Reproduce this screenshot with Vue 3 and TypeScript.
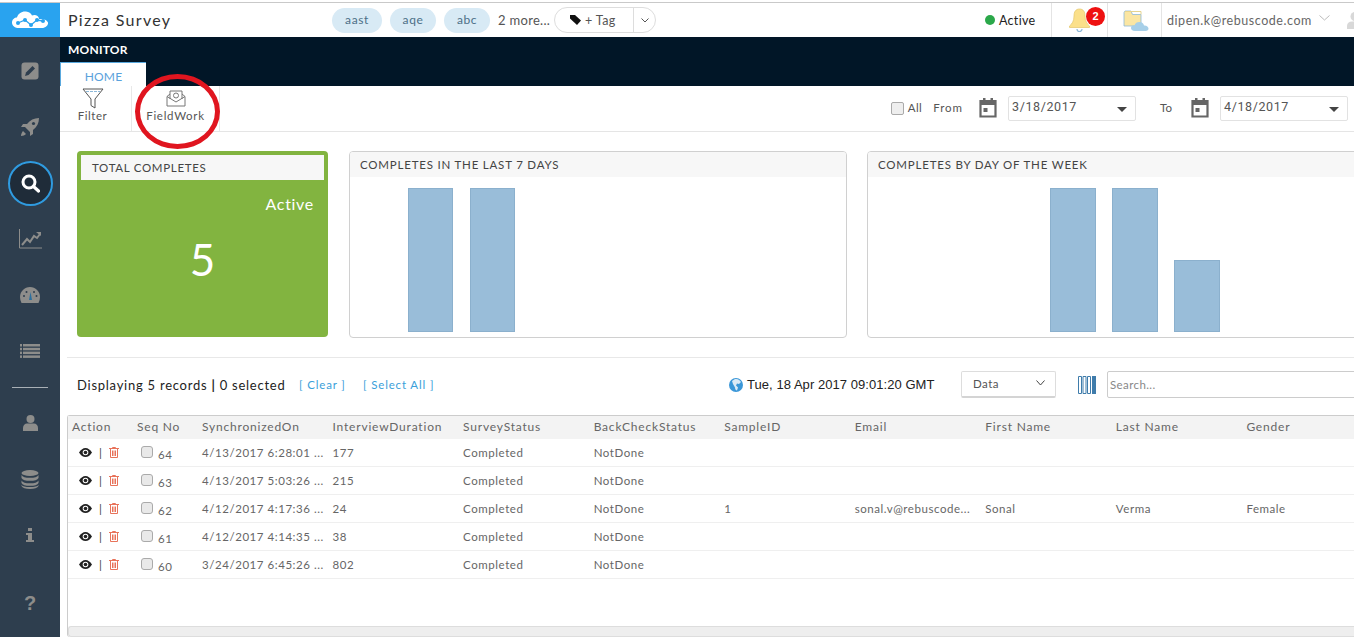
<script setup lang="ts">
const navTop = ["edit", "rocket", "search", "chart", "gauge", "list"];
const navBottom = ["user", "db", "info"];

const columns = [
  "Action", "Seq No", "SynchronizedOn", "InterviewDuration", "SurveyStatus",
  "BackCheckStatus", "SampleID", "Email", "First Name", "Last Name", "Gender",
];

const rows = [
  { seq: 64, date: "4/13/2017 6:28:01 ...", dur: 177, sample: "", email: "", first: "", last: "", gender: "" },
  { seq: 63, date: "4/13/2017 5:03:26 ...", dur: 215, sample: "", email: "", first: "", last: "", gender: "" },
  { seq: 62, date: "4/12/2017 4:17:36 ...", dur: 24, sample: "1", email: "sonal.v@rebuscode...", first: "Sonal", last: "Verma", gender: "Female" },
  { seq: 61, date: "4/12/2017 4:14:35 ...", dur: 38, sample: "", email: "", first: "", last: "", gender: "" },
  { seq: 60, date: "3/24/2017 6:45:26 ...", dur: 802, sample: "", email: "", first: "", last: "", gender: "" },
];

const last7 = [144, 144];
const byDay = [144, 144, 72];
</script>

<template>
  <div class="app">
    <aside class="sidebar">
      <div class="logo">
        <svg width="38" height="20" viewBox="0 0 38 20">
          <path d="M8 18c-4 0-7-2-7-5.500 0-3 2.500-5 5-5 1-4 5-6.500 9-6 3 .3 5 2 6 4 1.500-.8 4-.8 5.500.5 1 .8 1.500 2 1.500 3 3-.5 8 .5 9 3.500.5 3-3 6-7 5.500z" fill="#fff"/>
          <path d="M7 13l7-3 6 5 6-5 6 1" fill="none" stroke="#29a3ef" stroke-width="1.300"/>
          <circle cx="7" cy="13" r="2" fill="#29a3ef"/>
          <circle cx="14" cy="10" r="2" fill="#29a3ef"/>
          <circle cx="20" cy="15" r="2" fill="#29a3ef"/>
          <circle cx="26" cy="10" r="2" fill="#29a3ef"/>
          <circle cx="32" cy="11" r="2" fill="#29a3ef"/>
        </svg>
      </div>
      <nav class="nav">
        <div v-for="n in navTop" :key="n" class="nav-item">
          <svg v-if="n === 'edit'" width="18" height="18" viewBox="0 0 18 18">
            <rect x="0.500" y="0.500" width="17" height="17" rx="3" fill="#8d8d8b"/>
            <path d="M4 14l1-3.500 6.500-6.500 2.500 2.500-6.500 6.500z" fill="#2e3e4e"/>
          </svg>
          <svg v-else-if="n === 'rocket'" width="20" height="20" viewBox="0 0 20 20">
            <path d="M19 1c-5 0-9 2-12 6H3L1 10h4l5 5v4l3-2v-4c4-3 6-7 6-12z" fill="#8d8d8b"/>
            <path d="M3 14c-1 1-2 3-2 5 2 0 4-1 5-2z" fill="#8d8d8b"/>
            <circle cx="13.500" cy="6.500" r="1.600" fill="#2e3e4e"/>
          </svg>
          <div v-else-if="n === 'search'" class="search-ring">
            <svg width="20" height="20" viewBox="0 0 20 20">
              <circle cx="9" cy="9" r="6" fill="none" stroke="#fff" stroke-width="3"/>
              <path d="M13.500 13.500l5 4.500" stroke="#fff" stroke-width="3.200" stroke-linecap="round"/>
            </svg>
          </div>
          <svg v-else-if="n === 'chart'" width="23" height="20" viewBox="0 0 23 20">
            <path d="M.500 0v19H23" fill="none" stroke="#8d8d8b"/>
            <path d="M3 16l5-6 3 3 4-6 3 2 3-4" fill="none" stroke="#8d8d8b" stroke-width="2"/>
            <path d="M17 3h5v4z" fill="#8d8d8b"/>
          </svg>
          <svg v-else-if="n === 'gauge'" width="20" height="16" viewBox="0 0 20 16">
            <path d="M10 0C4.500 0 0 4.500 0 10c0 2 .5 4 1.500 6h17c1-2 1.500-4 1.500-6C20 4.500 15.500 0 10 0z" fill="#8d8d8b"/>
            <path d="M10.500 5L9 13h3z" fill="#2b6f9e"/>
            <circle cx="4" cy="9" r="1" fill="#2e3e4e"/>
            <circle cx="6.500" cy="5" r="1" fill="#2e3e4e"/>
            <circle cx="14" cy="5" r="1" fill="#2e3e4e"/>
            <circle cx="16.500" cy="9" r="1" fill="#2e3e4e"/>
          </svg>
          <svg v-else width="20" height="14" viewBox="0 0 20 14" fill="#8d8d8b">
            <rect x="0" y="0" width="2" height="2.500"/><rect x="3" y="0" width="17" height="2.500"/>
            <rect x="0" y="3.800" width="2" height="2.500"/><rect x="3" y="3.800" width="17" height="2.500"/>
            <rect x="0" y="7.600" width="2" height="2.500"/><rect x="3" y="7.600" width="17" height="2.500"/>
            <rect x="0" y="11.400" width="2" height="2.500"/><rect x="3" y="11.400" width="17" height="2.500"/>
          </svg>
        </div>
        <div class="nav-divider"></div>
        <div v-for="n in navBottom" :key="n" class="nav-item">
          <svg v-if="n === 'user'" width="15" height="16" viewBox="0 0 15 16" fill="#8d8d8b">
            <circle cx="7.500" cy="4" r="4"/>
            <path d="M0 16v-3c0-3 2-4.500 4-4.500h7c2 0 4 1.500 4 4.500v3z"/>
          </svg>
          <svg v-else-if="n === 'db'" width="18" height="19" viewBox="0 0 18 19" fill="#8d8d8b">
            <ellipse cx="9" cy="3" rx="8.500" ry="3"/>
            <path d="M.500 5c1 2 4 2.800 8.500 2.800S16.500 7 17.500 5v3c-1 2-4 2.800-8.500 2.800S1.500 10 .500 8z"/>
            <path d="M.500 10.500c1 2 4 2.800 8.500 2.800s7.500-.8 8.500-2.800v2.500c-1 2-4 2.800-8.500 2.800S1.500 15 .500 13z"/>
            <path d="M.500 15c1 1.500 4 2 8.500 2s7.500-.5 8.500-2v1c-1 2-4 3-8.500 3s-7.500-1-8.500-3z"/>
          </svg>
          <svg v-else width="8" height="14" viewBox="0 0 8 14" fill="#8d8d8b">
            <rect x="2" y="0" width="4" height="3"/>
            <path d="M0 5h6v7h2v2H0v-2h2V7H0z"/>
          </svg>
        </div>
        <div class="nav-item help">?</div>
      </nav>
    </aside>

    <div class="main">
      <header class="topbar">
        <span class="title">Pizza Survey</span>
        <div class="tags">
          <span class="pill p1">aast</span>
          <span class="pill p2">aqe</span>
          <span class="pill p3">abc</span>
          <span class="more">2 more...</span>
          <div class="tag-btn">
            <span class="tag-main">
              <svg width="11" height="10" viewBox="0 0 11 10"><path d="M0 0h5l6 5.500L7 10 0 3.500z" fill="#111"/></svg>
              + Tag
            </span>
            <span class="tag-caret">
              <svg width="8" height="5" viewBox="0 0 8 5"><path d="M.5.5L4 4 7.500.5" fill="none" stroke="#555"/></svg>
            </span>
          </div>
        </div>
        <div class="status">
          <span class="dot"></span>
          <span>Active</span>
        </div>
        <div class="bell">
          <svg width="21" height="25" viewBox="0 0 21 25">
            <path d="M10.500 1C6.500 1 5 4 5 8c0 5-2 8-4.500 10v1.500h20V18C18 16 16 13 16 8c0-4-1.500-7-5.500-7z" fill="#fbe08a" stroke="#e2c66a" stroke-width=".7"/>
            <path d="M8 21a2.500 2.500 0 0 0 5 0" fill="none" stroke="#8db8d8" stroke-width="1.200"/>
          </svg>
          <span class="badge">2</span>
        </div>
        <div class="folder">
          <svg width="26" height="24" viewBox="0 0 26 24">
            <path d="M1 4.500V18h17V6.500H9.500L8 3H2z" fill="#fbe6a2" stroke="#8db8d8" stroke-width=".8"/>
            <path d="M2 3.500h16v3" fill="none" stroke="#e6d48e"/>
            <path d="M12 23c-3 0-4-1.500-4-3 0-2 2-3 3.500-2.500C12 15 14 14 16.500 14c2.500 0 4 1.500 4.500 3.500 2.500-.3 4.500 1.300 4.500 3 0 1.500-1 2.500-3 2.500z" fill="#a6cfe8"/>
          </svg>
        </div>
        <div class="account">
          <span>dipen.k@rebuscode.com</span>
          <svg width="11" height="6" viewBox="0 0 11 6"><path d="M.5.5L5.500 5 10.500.5" fill="none" stroke="#bbb"/></svg>
          <svg class="user" width="16" height="17" viewBox="0 0 16 17" fill="#d8d8d8">
            <circle cx="8" cy="4.500" r="4.500"/>
            <path d="M0 17v-3c0-3 2-4.500 5-4.500h6c3 0 5 1.500 5 4.500v3z"/>
          </svg>
        </div>
      </header>

      <div class="darkbar">
        <div class="section-name">MONITOR</div>
        <div class="tab">HOME</div>
      </div>

      <div class="toolbar">
        <div class="tool tool-filter">
          <svg width="22" height="21" viewBox="0 0 22 21">
            <path d="M1 1h20l-8 10v9l-4-2.500V11z" fill="none" stroke="#555"/>
            <path d="M4 3.500h14" stroke="#8db8d8" stroke-dasharray="3 1"/>
          </svg>
          <span>Filter</span>
        </div>
        <div class="tool tool-field">
          <svg width="20" height="18" viewBox="0 0 20 18">
            <path d="M1 7.500V17h18V7.500L16 5V2H4v3z" fill="none" stroke="#777"/>
            <path d="M1 7.500L10 13l9-5.500M4 5v5M16 5v5" fill="none" stroke="#777"/>
            <circle cx="10" cy="6.500" r="2.500" fill="none" stroke="#777"/>
          </svg>
          <span>FieldWork</span>
        </div>
        <div class="dates">
          <span class="check"></span>
          <span class="all">All</span>
          <span class="from">From</span>
          <svg class="cal" width="18" height="20" viewBox="0 0 18 20">
            <path d="M1.500 3h15v15.500h-15z" fill="none" stroke="#666" stroke-width="2.200"/>
            <path d="M1 3h16v4H1zM4 0h2.500v3H4zM11.500 0H14v3h-2.500zM4.500 10h4v4h-4z" fill="#666"/>
          </svg>
          <div class="date-box">
            <span>3/18/2017</span>
            <i class="caret"></i>
          </div>
          <span class="to">To</span>
          <svg class="cal" width="18" height="20" viewBox="0 0 18 20">
            <path d="M1.500 3h15v15.500h-15z" fill="none" stroke="#666" stroke-width="2.200"/>
            <path d="M1 3h16v4H1zM4 0h2.500v3H4zM11.500 0H14v3h-2.500zM4.500 10h4v4h-4z" fill="#666"/>
          </svg>
          <div class="date-box">
            <span>4/18/2017</span>
            <i class="caret"></i>
          </div>
        </div>
      </div>

      <section class="widgets">
        <div class="total">
          <div class="total-head">TOTAL COMPLETES</div>
          <div class="total-status">Active</div>
          <div class="total-num">5</div>
        </div>
        <div class="chart chart-7">
          <div class="chart-head">COMPLETES IN THE LAST 7 DAYS</div>
          <div class="bars">
            <div v-for="(h, i) in last7" :key="i" class="bar" :style="{ height: h + 'px' }"></div>
          </div>
        </div>
        <div class="chart chart-week">
          <div class="chart-head">COMPLETES BY DAY OF THE WEEK</div>
          <div class="bars">
            <div v-for="(h, i) in byDay" :key="i" class="bar" :style="{ height: h + 'px' }"></div>
          </div>
        </div>
      </section>

      <section class="records">
        <div class="records-bar">
          <span class="count">Displaying 5 records <b>|</b> 0 selected</span>
          <a class="link l-clear">[ Clear ]</a>
          <a class="link l-all">[ Select All ]</a>
          <svg class="globe" width="14" height="14" viewBox="0 0 14 14">
            <circle cx="7" cy="7" r="7" fill="#3b97d8"/>
            <path d="M6 1c3-.5 5 1 6 3l-2 2-2-.5-1 2 2 2-1 3c-1 0-2-1-2-3L4 6 3 3z" fill="#dbeaf5"/>
          </svg>
          <span class="clock">Tue, 18 Apr 2017 09:01:20 GMT</span>
          <div class="data-select">
            <span>Data</span>
            <svg width="9" height="6" viewBox="0 0 9 6"><path d="M.5.5L4.500 5 8.500.5" fill="none" stroke="#444"/></svg>
          </div>
          <svg class="columns-icon" width="18" height="18" viewBox="0 0 18 18">
            <g fill="none" stroke="#3f7cab">
              <path d="M.5.500h3v17h-3zM5 .500h3v17H5zM9.500 .500h3v17h-3z"/>
            </g>
            <path d="M14 0h4v18h-4z" fill="#3f7cab"/>
          </svg>
          <div class="search">Search...</div>
        </div>

        <div class="grid-wrap">
          <table class="grid">
            <thead>
              <tr>
                <th v-for="c in columns" :key="c">{{ c }}</th>
              </tr>
            </thead>
            <tbody>
              <tr v-for="r in rows" :key="r.seq">
                <td>
                  <span class="actions">
                    <svg width="13" height="9" viewBox="0 0 13 9">
                      <path d="M0 4.500C2 1.500 4 0 6.500 0S11 1.500 13 4.500C11 7.500 9 9 6.500 9S2 7.500 0 4.500z" fill="#222"/>
                      <circle cx="6.500" cy="4.500" r="2.800" fill="#fff"/>
                      <circle cx="6.500" cy="4.500" r="1.800" fill="#222"/>
                    </svg>
                    <span class="sep">|</span>
                    <svg width="10" height="11" viewBox="0 0 10 11">
                      <path d="M0 1.500h10M3.500 1.500V.5h3v1M1.500 2v8.500h7V2M3.500 3.500v5.500M5 3.500v5.500M6.500 3.500v5.500" fill="none" stroke="#e8735a"/>
                    </svg>
                  </span>
                </td>
                <td>
                  <span class="seq"><i class="box"></i>{{ r.seq }}</span>
                </td>
                <td>{{ r.date }}</td>
                <td>{{ r.dur }}</td>
                <td>Completed</td>
                <td>NotDone</td>
                <td>{{ r.sample }}</td>
                <td>{{ r.email }}</td>
                <td>{{ r.first }}</td>
                <td>{{ r.last }}</td>
                <td>{{ r.gender }}</td>
              </tr>
            </tbody>
          </table>
          <div class="hscroll"></div>
        </div>
      </section>

      <div class="annotation"></div>
    </div>
  </div>
</template>

<style>
html, body {
  margin: 0;
  background: #fff;
  overflow: hidden;
}
</style>

<style scoped>
.app {
  display: flex;
  width: 1354px;
  height: 637px;
  overflow: hidden;
  font-family: Lato, "Open Sans", sans-serif;
  color: #555;
}

.sidebar {
  width: 60px;
  flex: none;
  background: #2e3e4e;
}
.logo {
  height: 34px;
  padding-top: 3px;
  background: linear-gradient(#fff 2px, #c9c9c9 2px, #c9c9c9 3px, #29a3ef 3px);
  display: flex;
  align-items: center;
  justify-content: center;
}
.nav {
  padding-top: 6px;
}
.nav-item {
  height: 56px;
  display: flex;
  align-items: center;
  justify-content: center;
}
.search-ring {
  width: 41px;
  height: 41px;
  border: 2px solid #2f9be0;
  border-radius: 50%;
  background: #1f2c39;
  display: flex;
  align-items: center;
  justify-content: center;
}
.nav-divider {
  height: 1px;
  margin: 8px 12px 7px;
  background: #a9b0b6;
}
.help {
  margin-top: 12px;
  color: #8d8d8b;
  font: bold 20px "Liberation Sans", sans-serif;
}

.main {
  position: relative;
  flex: 1;
  min-width: 0;
  overflow: hidden;
}

.topbar {
  height: 34px;
  padding-top: 3px;
  background: linear-gradient(#fff 2px, #c9c9c9 2px, #c9c9c9 3px, #fff 3px);
  display: flex;
  align-items: center;
}
.topbar > * {
  flex: none;
}
.title {
  margin: 0 0 2px 8px;
  width: 264px;
  font-size: 16px;
  letter-spacing: 1.300px;
  color: #333;
}
.tags {
  display: flex;
  align-items: center;
  width: 324px;
}
.pill {
  height: 25px;
  line-height: 23px;
  border-radius: 13px;
  background: #d8eaf5;
  color: #4c6f87;
  font-size: 12px;
  letter-spacing: .6px;
  text-align: center;
}
.p1 { width: 50px; margin-right: 8px; }
.p2 { width: 46px; margin-right: 8px; }
.p3 { width: 46px; margin-right: 8px; }
.more {
  width: 56px;
  font-size: 13px;
  color: #555;
  letter-spacing: .3px;
}
.tag-btn {
  width: 102px;
  height: 26px;
  box-sizing: border-box;
  border: 1px solid #ddd;
  border-radius: 13px;
  display: flex;
  font-size: 12.500px;
  color: #555;
}
.tag-main {
  width: 79px;
  padding-left: 15px;
  box-sizing: border-box;
  display: flex;
  align-items: center;
  gap: 4px;
  letter-spacing: .4px;
  border-right: 1px solid #ddd;
}
.tag-caret {
  flex: 1;
  display: flex;
  align-items: center;
  justify-content: center;
}
.status {
  display: flex;
  align-items: center;
  margin-left: 329px;
  width: 66px;
  height: 34px;
  font-size: 12.500px;
  color: #222;
  letter-spacing: .3px;
  border-right: 1px solid #e4e4e4;
}
.dot {
  width: 10px;
  height: 10px;
  border-radius: 50%;
  background: #2ba84a;
  margin-right: 4px;
  flex: none;
}
.bell {
  position: relative;
  width: 56px;
  height: 34px;
  border-right: 1px solid #e4e4e4;
  display: flex;
  align-items: center;
  padding-left: 17px;
  box-sizing: border-box;
}
.badge {
  position: absolute;
  left: 34px;
  top: 4px;
  width: 19px;
  height: 19px;
  border-radius: 50%;
  background: #ee1111;
  color: #fff;
  font: bold 11px/19px "Liberation Sans", sans-serif;
  text-align: center;
}
.folder {
  width: 54px;
  height: 34px;
  border-right: 1px solid #e4e4e4;
  box-sizing: border-box;
  padding-left: 15px;
  display: flex;
  align-items: center;
}
.account {
  display: flex;
  align-items: center;
  padding-left: 5px;
  font-size: 12.500px;
  letter-spacing: .55px;
  color: #666;
  white-space: nowrap;
}
.account svg {
  margin-left: 7px;
  margin-bottom: 4px;
}
.account .user {
  margin-left: 17px;
  margin-bottom: 0;
  flex: none;
}

.darkbar {
  position: relative;
  height: 49px;
  background: #011627;
}
.section-name {
  padding: 6px 0 0 8px;
  color: #fff;
  font-size: 12px;
  font-weight: 700;
  line-height: 14px;
  letter-spacing: .2px;
}
.tab {
  position: absolute;
  left: 0;
  bottom: 0;
  box-sizing: border-box;
  width: 86px;
  height: 24px;
  border-top: 1px solid #5aa9de;
  border-left: 1px solid #5aa9de;
  background: #fff;
  color: #5aa2dc;
  font-size: 12px;
  line-height: 28px;
  text-align: center;
  letter-spacing: .2px;
}

.toolbar {
  height: 45px;
  display: flex;
  border-bottom: 1px solid #e5e5e5;
}
.tool {
  box-sizing: border-box;
  height: 45px;
  display: flex;
  flex-direction: column;
  align-items: center;
  font-size: 11.500px;
  letter-spacing: .5px;
  color: #555;
  border-right: 1px solid #e8e8e8;
}
.tool-filter {
  width: 72px;
  padding: 2px 6px 0 0;
}
.tool-field {
  width: 88px;
  padding: 3px 0 0 0;
  gap: 2px;
  font-size: 11.500px;
  letter-spacing: .7px;
}
.dates {
  margin-left: auto;
  display: flex;
  align-items: center;
  padding-right: 6px;
  font-size: 11.500px;
  height: 44px;
  color: #555;
}
.check {
  width: 13px;
  height: 13px;
  box-sizing: border-box;
  border: 1px solid #aaa;
  border-radius: 2px;
  background: #eee;
}
.all {
  margin-left: 4px;
  margin-bottom: 2px;
  letter-spacing: .4px;
}
.from {
  margin: 0 16px 2px 11px;
  letter-spacing: 1px;
}
.to {
  margin: 0 19px 2px 24px;
}
.date-box {
  position: relative;
  box-sizing: border-box;
  width: 128px;
  height: 25px;
  margin-left: 11px;
  padding: 2px 0 0 3px;
  border: 1px solid #e2e2e2;
  border-radius: 2px;
  font: 12.500px/15px Roboto, sans-serif;
  letter-spacing: .6px;
  color: #555;
}
.caret {
  position: absolute;
  right: 8px;
  top: 10px;
  border: 5px solid transparent;
  border-top: 5px solid #444;
  border-bottom: 0;
}

.widgets {
  display: flex;
  align-items: flex-start;
  margin-left: 7px;
  padding: 19px 0 0 10px;
  height: 226px;
  box-sizing: border-box;
  border-bottom: 1px solid #e8e8e8;
}
.total {
  flex: none;
  box-sizing: border-box;
  width: 251px;
  height: 186px;
  padding: 4px;
  background: #82b440;
  border-radius: 4px;
  color: #fff;
}
.total-head {
  height: 25px;
  padding-left: 11px;
  background: #f7f7f7;
  color: #444;
  font-size: 11.500px;
  line-height: 26px;
  letter-spacing: .7px;
}
.total-status {
  margin-top: 14px;
  padding-right: 10px;
  text-align: right;
  font-size: 16px;
  letter-spacing: .7px;
}
.total-num {
  margin-top: 23px;
  text-align: center;
  font-size: 44px;
  line-height: 46px;
}
.chart {
  flex: none;
  box-sizing: border-box;
  height: 187px;
  margin-left: 21px;
  border: 1px solid #d0d0d0;
  border-radius: 4px;
  overflow: hidden;
}
.chart-7 {
  width: 498px;
}
.chart-week {
  width: 500px;
  margin-left: 20px;
}
.chart-head {
  height: 25px;
  padding-left: 10px;
  background: #f7f7f7;
  color: #444;
  font-size: 11.500px;
  line-height: 25px;
  letter-spacing: .8px;
}
.bars {
  height: 155px;
  display: flex;
  align-items: flex-end;
}
.chart-7 .bars {
  padding-left: 58px;
  gap: 17px;
}
.chart-week .bars {
  padding-left: 182px;
  gap: 16px;
}
.bar {
  width: 45px;
  box-sizing: border-box;
  background: #99bdd9;
  border: 1px solid #8bb0cd;
}
.chart-week .bar {
  width: 46px;
}

.records-bar {
  height: 57px;
  box-sizing: border-box;
  display: flex;
  align-items: center;
  padding: 0 0 4px 17px;
  white-space: nowrap;
}
.records-bar > * {
  flex: none;
}
.count {
  width: 222px;
  font-size: 13px;
  letter-spacing: .75px;
  color: #222;
}
.link {
  color: #3aa0da;
  font-size: 11.500px;
  letter-spacing: .85px;
}
.l-clear {
  width: 64px;
}
.l-all {
  width: 366px;
}
.clock {
  width: 214px;
  margin-left: 4px;
  font: 13px "Liberation Sans", sans-serif;
  letter-spacing: .05px;
  color: #222;
}
.data-select {
  box-sizing: border-box;
  width: 95px;
  height: 27px;
  padding: 0 10px 2px 11px;
  display: flex;
  align-items: center;
  justify-content: space-between;
  border: 1px solid #ddd;
  border-bottom: 2px solid #d4d4d4;
  border-radius: 2px;
  font-size: 11.500px;
  letter-spacing: .5px;
}
.columns-icon {
  margin: 0 11px 0 22px;
}
.search {
  box-sizing: border-box;
  width: 300px;
  height: 27px;
  padding-left: 2px;
  border: 1px solid #ccc;
  border-radius: 2px;
  font-size: 11.500px;
  line-height: 25px;
  letter-spacing: .4px;
  color: #888;
}

.grid-wrap {
  position: relative;
  margin-left: 7px;
  height: 221px;
  border-top: 1px solid #ccc;
  border-left: 1px solid #ccc;
  border-radius: 3px 0 0 3px;
}
.grid {
  width: 1305px;
  border-collapse: collapse;
  table-layout: fixed;
  font-size: 11.500px;
  letter-spacing: .55px;
  color: #666;
}
.grid th {
  height: 23px;
  padding: 0 0 2px 4px;
  box-sizing: border-box;
  background: #f3f3f3;
  font-size: 12px;
  font-weight: 400;
  text-align: left;
  letter-spacing: .8px;
  color: #666;
  white-space: nowrap;
}
.grid th:nth-child(-n+2) { width: 65px; }
.grid td {
  height: 27px;
  padding: 0 0 0 4px;
  border-bottom: 1px solid #efefef;
  white-space: nowrap;
  overflow: hidden;
}
.actions {
  display: flex;
  align-items: center;
  margin-left: 7px;
  gap: 7px;
}
.sep {
  color: #444;
}
.seq {
  display: flex;
  align-items: flex-end;
  margin-left: 4px;
  gap: 5px;
  line-height: 13px;
  padding-top: 2px;
}
.box {
  width: 12px;
  height: 12px;
  margin-bottom: 3px;
  box-sizing: border-box;
  border: 1px solid #aaa;
  border-radius: 3px;
  background: #e9e9e9;
}
.hscroll {
  position: absolute;
  left: 0;
  right: 0;
  bottom: 0;
  height: 11px;
  box-sizing: border-box;
  background: #eee;
  border: 1px solid #ddd;
  border-right: 0;
  border-radius: 3px 0 0 3px;
}

.annotation {
  position: absolute;
  left: 75px;
  top: 74px;
  box-sizing: border-box;
  width: 85px;
  height: 75px;
  border: 5px solid #e0151f;
  border-radius: 50%;
  pointer-events: none;
}
</style>
